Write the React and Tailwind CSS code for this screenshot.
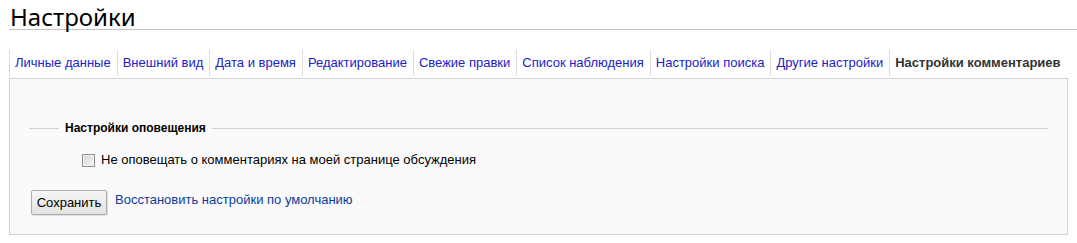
const tabs = [
  'Личные данные',
  'Внешний вид',
  'Дата и время',
  'Редактирование',
  'Свежие правки',
  'Список наблюдения',
  'Настройки поиска',
  'Другие настройки',
]

export default function App() {
  return (
    <div className="w-[1077px] h-[243px] bg-white font-['Liberation_Sans',Arial,sans-serif] text-[13px] text-black">
      <h1 className="ml-[9px] border-b border-[#c4c4c4] pl-[1px] pt-[4px] font-['Noto_Sans','DejaVu_Sans',sans-serif] text-[24px] leading-[25px] font-normal">
        Настройки
      </h1>

      <div className="ml-[9px] mt-[20px] flex h-[26px]">
        {tabs.map((tab) => (
          <a
            key={tab}
            href="#"
            className="h-[26px] border-l border-[#dcdcdc] pl-[5px] pr-[6px] leading-[26px] whitespace-nowrap text-[#2121c9]"
          >
            {tab}
          </a>
        ))}
        <span className="h-[26px] border-l border-[#dcdcdc] pl-[5px] pr-[6px] leading-[26px] whitespace-nowrap font-bold text-[#333]">
          Настройки комментариев
        </span>
      </div>

      <div className="ml-[9px] mt-[2px] w-[1059px] border border-[#d0d0d0] bg-[#fafafa] px-[19px] pt-[42px] pb-[19px]">
        <div className="flex h-[14px] items-center">
          <div className="h-px w-[30px] bg-[#d2d2d2]" />
          <span className="px-[6px] text-[12px] leading-[14px] font-bold">Настройки оповещения</span>
          <div className="h-px flex-1 bg-[#d2d2d2]" />
        </div>

        <label className="mt-[17px] ml-[53px] flex h-[16px] items-center gap-[6px] leading-[16px]">
          <span className="h-[13px] w-[13px] border border-[#8e8f8f] bg-gradient-to-br from-[#d6d6d6] to-[#f6f6f6] shadow-[inset_0_0_0_1px_#f4f4f4]" />
          <span>Не оповещать о комментариях на моей странице обсуждения</span>
        </label>

        <div className="mt-[22px] ml-[2px] flex items-start gap-[8px]">
          <button className="h-[25px] w-[76px] rounded-[2px] border border-[#acacac] bg-gradient-to-b from-[#f6f6f6] to-[#e2e2e2] text-[13px] leading-[23px] shadow-[1px_1px_1px_rgba(0,0,0,0.12)]">
            Сохранить
          </button>
          <a href="#" className="mt-[2px] leading-[16px] text-[#0b3a9e]">
            Восстановить настройки по умолчанию
          </a>
        </div>
      </div>
    </div>
  )
}
